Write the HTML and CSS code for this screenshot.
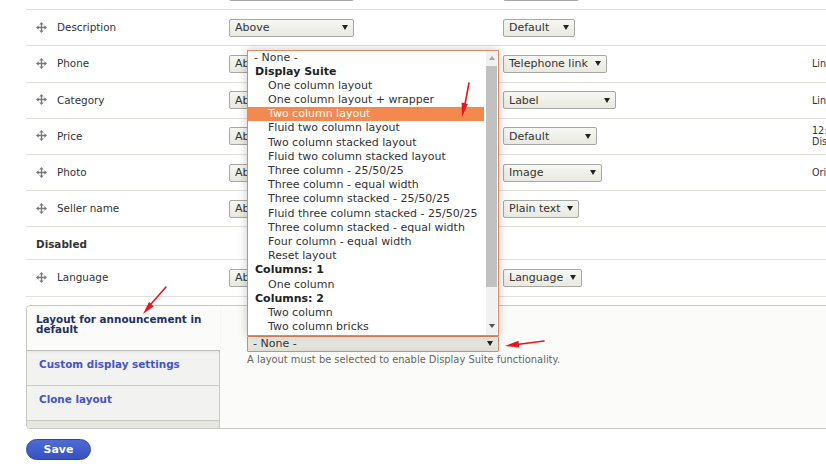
FILE: index.html
```html
<!DOCTYPE html>
<html lang="en">
<head>
<meta charset="utf-8">
<title>Manage display</title>
<link rel="stylesheet" href="styles.css">
</head>
<body>
<svg class="defs" width="0" height="0">
  <symbol id="drag" viewBox="0 0 11 11">
    <path d="M5.5 2v7M2 5.5h7" stroke="#7a7a7a" stroke-width="1.3" fill="none"/>
    <path d="M5.5 0L3.3 2.6h4.4zM5.5 11L3.3 8.4h4.4zM0 5.5L2.6 3.3v4.4zM11 5.5L8.4 3.3v4.4z" fill="#7a7a7a"/>
  </symbol>
</svg>

<div class="page">
  <div class="fields">
    <div class="row">
      <div class="label"></div>
      <div class="cell"><div class="select w-125"><span></span><i class="caret"></i></div></div>
      <div class="cell"><div class="select w-76"><span></span><i class="caret"></i></div></div>
      <div class="summary"></div>
    </div>
    <div class="row">
      <div class="label"><svg class="handle"><use href="#drag"/></svg><span>Description</span></div>
      <div class="cell"><div class="select w-125"><span>Above</span><i class="caret"></i></div></div>
      <div class="cell"><div class="select w-72"><span>Default</span><i class="caret"></i></div></div>
      <div class="summary"></div>
    </div>
    <div class="row">
      <div class="label"><svg class="handle"><use href="#drag"/></svg><span>Phone</span></div>
      <div class="cell"><div class="select w-125"><span>Above</span><i class="caret"></i></div></div>
      <div class="cell"><div class="select w-104"><span>Telephone link</span><i class="caret"></i></div></div>
      <div class="summary">Link to phone</div>
    </div>
    <div class="row">
      <div class="label"><svg class="handle"><use href="#drag"/></svg><span>Category</span></div>
      <div class="cell"><div class="select w-125"><span>Above</span><i class="caret"></i></div></div>
      <div class="cell"><div class="select w-113"><span>Label</span><i class="caret"></i></div></div>
      <div class="summary">Link to the referenced entity</div>
    </div>
    <div class="row">
      <div class="label"><svg class="handle"><use href="#drag"/></svg><span>Price</span></div>
      <div class="cell"><div class="select w-125"><span>Above</span><i class="caret"></i></div></div>
      <div class="cell"><div class="select w-94"><span>Default</span><i class="caret"></i></div></div>
      <div class="summary">12:34.56<br>Display prefix</div>
    </div>
    <div class="row">
      <div class="label"><svg class="handle"><use href="#drag"/></svg><span>Photo</span></div>
      <div class="cell"><div class="select w-125"><span>Above</span><i class="caret"></i></div></div>
      <div class="cell"><div class="select w-99"><span>Image</span><i class="caret"></i></div></div>
      <div class="summary">Original image</div>
    </div>
    <div class="row">
      <div class="label"><svg class="handle"><use href="#drag"/></svg><span>Seller name</span></div>
      <div class="cell"><div class="select w-125"><span>Above</span><i class="caret"></i></div></div>
      <div class="cell"><div class="select w-76"><span>Plain text</span><i class="caret"></i></div></div>
      <div class="summary"></div>
    </div>
    <div class="row region">
      <div class="region-title">Disabled</div>
    </div>
    <div class="row">
      <div class="label"><svg class="handle"><use href="#drag"/></svg><span>Language</span></div>
      <div class="cell"><div class="select w-125"><span>Above</span><i class="caret"></i></div></div>
      <div class="cell"><div class="select w-79"><span>Language</span><i class="caret"></i></div></div>
      <div class="summary"></div>
    </div>
  </div>

  <div class="vtabs">
    <div class="tab-list">
      <div class="tab selected">Layout for announcement in default</div>
      <div class="tab">Custom display settings</div>
      <div class="tab">Clone layout</div>
      <div class="tab-fill"></div>
    </div>
    <div class="panel">
      <div class="layout-field">
        <div class="listbox">
          <div class="options">
            <div class="opt">- None -</div>
            <div class="group">Display Suite</div>
            <div class="opt sub">One column layout</div>
            <div class="opt sub">One column layout + wrapper</div>
            <div class="opt sub active">Two column layout</div>
            <div class="opt sub">Fluid two column layout</div>
            <div class="opt sub">Two column stacked layout</div>
            <div class="opt sub">Fluid two column stacked layout</div>
            <div class="opt sub">Three column - 25/50/25</div>
            <div class="opt sub">Three column - equal width</div>
            <div class="opt sub">Three column stacked - 25/50/25</div>
            <div class="opt sub">Fluid three column stacked - 25/50/25</div>
            <div class="opt sub">Three column stacked - equal width</div>
            <div class="opt sub">Four column - equal width</div>
            <div class="opt sub">Reset layout</div>
            <div class="group">Columns: 1</div>
            <div class="opt sub">One column</div>
            <div class="group">Columns: 2</div>
            <div class="opt sub">Two column</div>
            <div class="opt sub">Two column bricks</div>
          </div>
          <div class="scrollbar">
            <i class="sb-up"></i>
            <div class="sb-thumb"></div>
            <i class="sb-down"></i>
          </div>
        </div>
        <div class="select focus"><span>- None -</span><i class="caret"></i></div>
      </div>
      <div class="help">A layout must be selected to enable Display Suite functionality.</div>
    </div>
  </div>

  <div class="actions">
    <button class="btn" type="button">Save</button>
  </div>
</div>

<svg class="marks" viewBox="0 0 826 475" width="826" height="475">
  <g stroke="#e5161c" stroke-width="1.6" fill="#e5161c" stroke-linecap="round">
    <line x1="469" y1="83" x2="465" y2="104"/>
    <polygon points="462,117 467.8,103.9 461.6,102.6" stroke="none"/>
    <line x1="166" y1="287" x2="151" y2="304"/>
    <polygon points="143,314 153.8,306.2 149,302" stroke="none"/>
    <line x1="544" y1="341" x2="519" y2="344.2"/>
    <polygon points="505,346 519.3,347.6 518.5,340.8" stroke="none"/>
  </g>
</svg>
</body>
</html>
```

FILE: styles.css
```css
* {
  box-sizing: border-box;
}

html,
body {
  margin: 0;
  background: #fff;
}

body {
  font-family: "DejaVu Sans", "Noto Sans", sans-serif;
  color: #333;
  height: 475px;
  overflow: hidden;
  position: relative;
}

.defs {
  position: absolute;
}

.page {
  padding-left: 26px;
}

/* Field table */
.fields {
  margin-top: -26px;
}

.row {
  display: grid;
  grid-template-columns: 203px 274px 309px 1fr;
  align-items: center;
  height: 36.2px;
  border-bottom: 1px solid #e1e0da;
}

.row.region {
  height: 33px;
}

.label {
  display: flex;
  align-items: center;
  gap: 10px;
  padding-left: 10px;
  padding-bottom: 1px;
  font-size: 10.4px;
}

.handle {
  width: 11px;
  height: 11px;
  flex: none;
}

.region-title {
  padding-left: 10px;
  padding-top: 1px;
  font-size: 10.4px;
  font-weight: bold;
}

.summary {
  font-size: 9.6px;
  line-height: 11px;
  white-space: nowrap;
}

/* Select boxes */
.select {
  display: flex;
  align-items: center;
  justify-content: space-between;
  height: 18px;
  padding: 0 5px 0 5px;
  border: 1px solid #a7a7a3;
  border-radius: 2px;
  background: linear-gradient(#f7f7f3, #e9e9e2);
  font-size: 11px;
  color: #333;
  white-space: nowrap;
}

.caret {
  width: 0;
  height: 0;
  border-left: 3.5px solid transparent;
  border-right: 3.5px solid transparent;
  border-top: 5px solid #222;
  margin-left: 6px;
}

.w-72 { width: 72px; }
.w-76 { width: 76px; }
.w-79 { width: 79px; }
.w-94 { width: 94px; }
.w-99 { width: 99px; }
.w-104 { width: 104px; }
.w-113 { width: 113px; }
.w-125 { width: 125px; }

/* Vertical tabs */
.vtabs {
  display: flex;
  height: 124px;
  margin-top: 8px;
  margin-right: -20px;
  border: 1px solid #c9c9c4;
  border-radius: 4px 0 0 4px;
  background: #fbfbf9;
}

.tab-list {
  display: flex;
  flex-direction: column;
  width: 193px;
  background: #e6e6e2;
  border-radius: 4px 0 0 4px;
}

.tab {
  height: 35px;
  padding: 7px 12px 0;
  border-top: 1px solid #c9c9c4;
  border-right: 1px solid #c9c9c4;
  background: #f2f2f0;
  font-size: 10.4px;
  line-height: 13px;
  font-weight: bold;
  color: #4655c4;
}

.tab.selected {
  height: 44px;
  padding: 8px 10px 0 9px;
  border: none;
  border-radius: 4px 0 0 0;
  background: #fbfbf9;
  line-height: 10px;
  color: #24305f;
  box-shadow: 0 2px 3px rgba(0, 0, 0, 0.06);
  position: relative;
}

.tab-fill {
  flex: 1;
  border-top: 1px solid #c9c9c4;
  border-right: 1px solid #c9c9c4;
}

.panel {
  flex: 1;
  padding: 30px 0 0 27px;
}

.layout-field {
  position: relative;
  width: 252px;
}

.select.focus {
  height: 16px;
  padding: 0 5px 0 5px;
  border-color: #dc8a60;
  border-radius: 1px;
  background: linear-gradient(#eeeee8, #dfdfd6);
}

.help {
  margin-top: 2px;
  font-size: 9.9px;
  line-height: 12px;
  color: #666;
  white-space: nowrap;
}

/* Open layout list */
.listbox {
  position: absolute;
  left: 0;
  bottom: 100%;
  width: 252px;
  height: 286px;
  display: flex;
  border: 1px solid #dc8a60;
  background: #fff;
  box-shadow: 0 0 9px rgba(0, 0, 0, 0.22);
  z-index: 5;
}

.options {
  width: 236px;
  overflow: hidden;
  font-size: 11px;
  color: #333;
}

.opt,
.group {
  height: 14.2px;
  line-height: 14.2px;
  white-space: nowrap;
  padding-left: 6px;
}

.group {
  padding-left: 7px;
  font-weight: bold;
  color: #222;
}

.opt.sub {
  padding-left: 20px;
}

.opt.active {
  background: #f4894f;
  color: #fff;
}

.scrollbar {
  position: relative;
  width: 11px;
  margin: 0 1px 0 2px;
  background: #f1f1f1;
}

.sb-thumb {
  position: absolute;
  left: 0;
  right: 0;
  top: 15px;
  height: 221px;
  background: #c1c1c1;
}

.sb-up,
.sb-down {
  position: absolute;
  left: 2.5px;
  width: 0;
  height: 0;
  border-left: 3px solid transparent;
  border-right: 3px solid transparent;
}

.sb-up {
  top: 5px;
  border-bottom: 4px solid #a3a3a3;
}

.sb-down {
  bottom: 7px;
  border-top: 4px solid #505050;
}

/* Form actions */
.actions {
  margin-top: 10px;
}

.btn {
  display: block;
  width: 65px;
  height: 21px;
  padding: 0;
  border: 1px solid #2c45a6;
  border-radius: 11px;
  background: linear-gradient(#4e6bd5, #3552c1);
  color: #fff;
  font-family: "DejaVu Sans", sans-serif;
  font-size: 11px;
  font-weight: bold;
}

/* Annotation arrows */
.marks {
  position: absolute;
  left: 0;
  top: 0;
  pointer-events: none;
  z-index: 10;
}
```
